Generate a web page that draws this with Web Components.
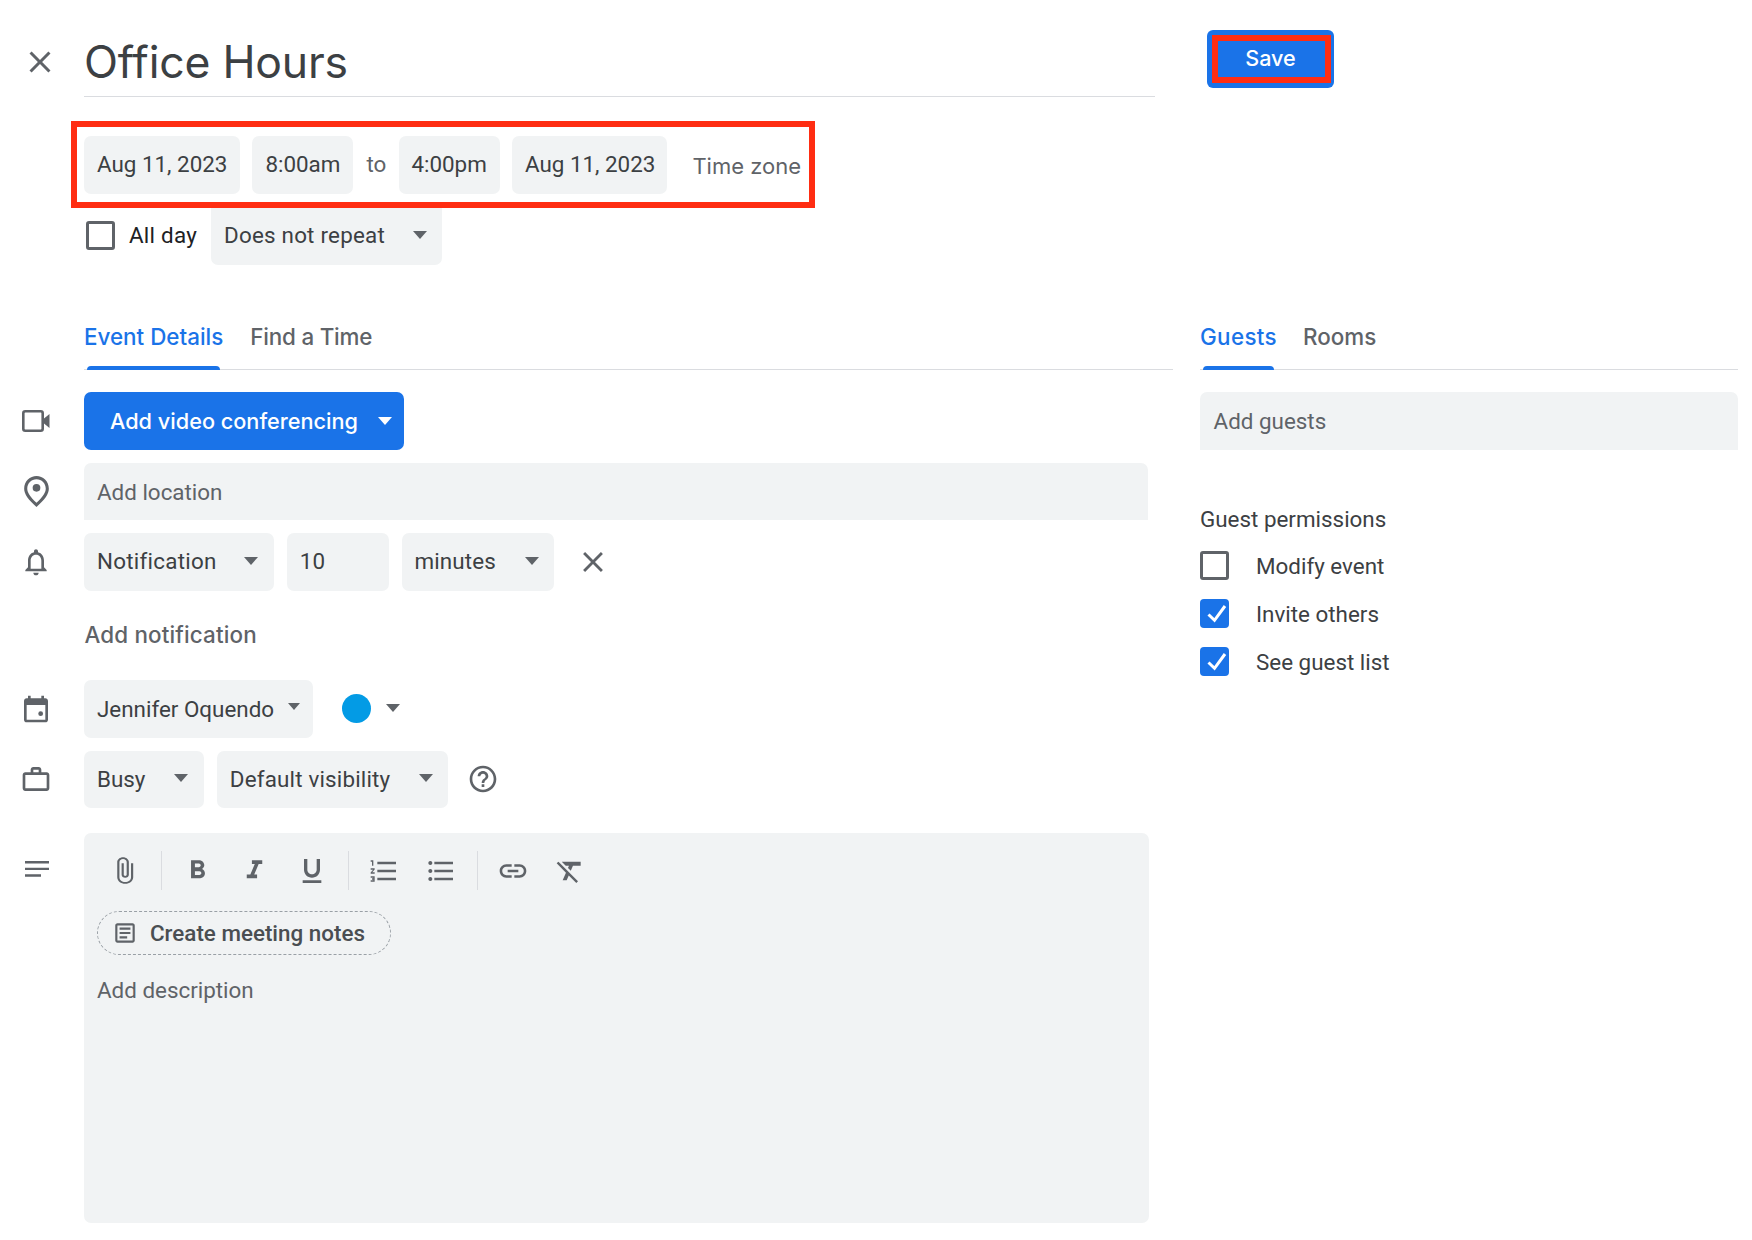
<!DOCTYPE html>
<html lang="en">
<head>
<meta charset="utf-8">
<title>Office Hours</title>
<style>
html,body{margin:0;padding:0;background:#fff;font-family:Roboto,"Liberation Sans",sans-serif;}
</style>
</head>
<body>
<gc-event-editor></gc-event-editor>
<script>
const ICONS={
close:'<path d="M19 6.41L17.59 5 12 10.59 6.41 5 5 6.41 10.59 12 5 17.59 6.41 19 12 13.41 17.59 19 19 17.59 13.41 12z"/>',
pin:'<path d="M18 10.2C18 6.57 15.35 4 12 4s-6 2.57-6 6.2c0 2.34 1.95 5.44 6 9.14 4.05-3.7 6-6.8 6-9.14zM12 2c4.2 0 8 3.22 8 8.2 0 3.32-2.67 7.25-8 11.8-5.33-4.55-8-8.48-8-11.8C4 5.22 7.8 2 12 2z"/><circle cx="12" cy="9.6" r="2.5"/>',
bell:'<path d="M12 22c1.1 0 2-.9 2-2h-4c0 1.1.9 2 2 2zm6-6v-5c0-3.07-1.63-5.64-4.5-6.32V4c0-.83-.67-1.5-1.5-1.5s-1.5.67-1.5 1.5v.68C7.64 5.36 6 7.92 6 11v5l-2 2v1h16v-1l-2-2zm-2 1H8v-6c0-2.48 1.51-4.5 4-4.5s4 2.02 4 4.5v6z"/>',
calendar:'<path d="M19 4h-1V2h-2v2H8V2H6v2H5c-1.1 0-2 .9-2 2v14c0 1.1.9 2 2 2h14c1.1 0 2-.9 2-2V6c0-1.1-.9-2-2-2zm0 16H5V9h14v11z"/><circle cx="15.5" cy="15.5" r="1.8"/>',
briefcase:'<path d="M20 7h-4V5c0-1.1-.9-2-2-2h-4c-1.1 0-2 .9-2 2v2H4c-1.1 0-2 .9-2 2v10c0 1.1.9 2 2 2h16c1.1 0 2-.9 2-2V9c0-1.1-.9-2-2-2zM10 5h4v2h-4V5zm10 14H4V9h16v10z"/>',
help:'<path d="M11 18h2v-2h-2v2zm1-16C6.48 2 2 6.48 2 12s4.48 10 10 10 10-4.48 10-10S17.52 2 12 2zm0 18c-4.41 0-8-3.59-8-8s3.59-8 8-8 8 3.59 8 8-3.59 8-8 8zm0-14c-2.21 0-4 1.79-4 4h2c0-1.1.9-2 2-2s2 .9 2 2c0 2-3 1.75-3 5h2c0-2.25 3-2.5 3-5 0-2.21-1.79-4-4-4z"/>',
lines:'<path d="M3 6h18v1.8H3zM3 11h18v1.8H3zM3 16h12v1.8H3z"/>',
clip:'<path d="M16.5 6v11.5c0 2.21-1.79 4-4 4s-4-1.79-4-4V5c0-1.38 1.12-2.5 2.5-2.5s2.5 1.12 2.5 2.5v10.5c0 .55-.45 1-1 1s-1-.45-1-1V6H10v9.5c0 1.38 1.12 2.5 2.5 2.5s2.5-1.12 2.5-2.5V5c0-2.21-1.79-4-4-4S7 2.79 7 5v12.5c0 3.04 2.46 5.5 5.5 5.5s5.5-2.46 5.5-5.5V6h-1.5z"/>',
bold:'<path d="M15.6 10.79c.97-.67 1.65-1.77 1.65-2.79 0-2.26-1.75-4-4-4H7v14h7.04c2.09 0 3.71-1.7 3.71-3.79 0-1.52-.86-2.82-2.15-3.42zM10 6.5h3c.83 0 1.5.67 1.5 1.5s-.67 1.5-1.5 1.5h-3v-3zm3.5 9H10v-3h3.5c.83 0 1.5.67 1.5 1.5s-.67 1.5-1.5 1.5z"/>',
italic:'<path d="M10 4v3h2.21l-3.42 8H6v3h8v-3h-2.21l3.42-8H18V4z"/>',
underline:'<path d="M12 17c3.31 0 6-2.69 6-6V3h-2.5v8c0 1.93-1.57 3.5-3.5 3.5S8.5 12.93 8.5 11V3H6v8c0 3.31 2.69 6 6 6zm-7 2v2h14v-2H5z"/>',
ol:'<path d="M2 17h2v.5H3v1h1v.5H2v1h3v-4H2v1zm1-9h1V4H2v1h1v3zm-1 3h1.8L2 13.1v.9h3v-1H3.2L5 10.9V10H2v1zm5-6v2h14V5H7zm0 14h14v-2H7v2zm0-6h14v-2H7v2z"/>',
ul:'<path d="M4 10.5c-.83 0-1.5.67-1.5 1.5s.67 1.5 1.5 1.5 1.5-.67 1.5-1.5-.67-1.5-1.5-1.5zm0-6c-.83 0-1.5.67-1.5 1.5S3.17 7.5 4 7.5 5.5 6.83 5.5 6 4.83 4.5 4 4.5zm0 12c-.83 0-1.5.68-1.5 1.5s.68 1.5 1.5 1.5 1.5-.68 1.5-1.5-.67-1.5-1.5-1.5zM7 19h14v-2H7v2zm0-6h14v-2H7v2zm0-8v2h14V5H7z"/>',
link:'<path d="M3.9 12c0-1.71 1.39-3.1 3.1-3.1h4V7H7c-2.76 0-5 2.24-5 5s2.24 5 5 5h4v-1.9H7c-1.71 0-3.1-1.39-3.1-3.1zM8 13h8v-2H8v2zm9-6h-4v1.9h4c1.71 0 3.1 1.39 3.1 3.1s-1.39 3.1-3.1 3.1h-4V17h4c2.76 0 5-2.24 5-5s-2.24-5-5-5z"/>',
clear:'<path d="M3.27 5L2 6.27l6.97 6.97L6.5 19h3l1.57-3.66L16.73 21 18 19.73 3.55 5.27 3.27 5zM6 5v.18L8.82 8h2.4l-.72 1.68 2.1 2.1L14.21 8H20V5H6z"/>',
note:'<path d="M19 5v14H5V5h14m0-2H5c-1.1 0-2 .9-2 2v14c0 1.1.9 2 2 2h14c1.1 0 2-.9 2-2V5c0-1.1-.9-2-2-2z"/><path d="M14 17H7v-2h7v2zm3-4H7v-2h10v2zm0-4H7V7h10v2z"/>'
};

class GcIcon extends HTMLElement{
  connectedCallback(){
    if(this.shadowRoot)return;
    const s=this.getAttribute('size')||'32';
    const n=this.getAttribute('name');
    const r=this.attachShadow({mode:'open'});
    let svg;
    if(n==='video'){
      svg=`<svg width="28" height="22" viewBox="0 0 28 22"><rect x="1.3" y="1.3" width="19.4" height="19.4" rx="2" fill="none" stroke="currentColor" stroke-width="2.6"/><path d="M22 8.5L27.5 4v14L22 13.5z" fill="currentColor"/></svg>`;
    }else{
      svg=`<svg width="${s}" height="${s}" viewBox="0 0 24 24" fill="currentColor">${ICONS[n]||''}</svg>`;
    }
    r.innerHTML=`<style>:host{display:inline-flex;align-items:center;justify-content:center;color:#5f6368;line-height:0}svg{display:block}</style>${svg}`;
  }
}
customElements.define('gc-icon',GcIcon);

class GcCaret extends HTMLElement{
  constructor(){
    super();
    this.attachShadow({mode:'open'}).innerHTML=`<style>
      :host{display:block;flex:none;width:0;height:0;border-left:var(--cw,7px) solid transparent;border-right:var(--cw,7px) solid transparent;border-top:var(--ch,8px) solid var(--cc,#5f6368);transform:translateY(var(--cy,-1px))}
    </style>`;
  }
}
customElements.define('gc-caret',GcCaret);

class GcChip extends HTMLElement{
  constructor(){
    super();
    this.attachShadow({mode:'open'}).innerHTML=`<style>
      :host{display:inline-flex;align-items:center;box-sizing:border-box;height:57.6px;padding:0 var(--pr,13px) 0 var(--pl,13px);background:#f1f3f4;border-radius:7px;color:#3c4043;font:400 22.4px/1 Roboto,sans-serif;white-space:nowrap;width:var(--w,auto);letter-spacing:var(--ls,0)}
      .t{flex:1;display:block;transform:translateY(var(--ty,-1px))}
      gc-caret{display:none}
      :host([caret]) gc-caret{display:block}
    </style><span class="t"><slot></slot></span><gc-caret></gc-caret>`;
  }
}
customElements.define('gc-chip',GcChip);

class GcCallout extends HTMLElement{
  constructor(){
    super();
    this.attachShadow({mode:'open'}).innerHTML=`<style>
      :host{display:inline-flex;position:relative}
      .m{position:absolute;top:var(--t);right:var(--r);bottom:var(--b);left:var(--l);border:6px solid #ff2d12;pointer-events:none;z-index:2}
    </style><slot></slot><div class="m"></div>`;
  }
}
customElements.define('gc-callout',GcCallout);

class GcTab extends HTMLElement{
  constructor(){
    super();
    this.attachShadow({mode:'open'}).innerHTML=`<style>
      :host{display:inline-flex;align-items:center;position:relative;height:65px;color:#5f6368;font:500 22.4px/1 Inter,Roboto,sans-serif;white-space:nowrap}
      :host([active]){color:#1a73e8}
      :host([active])::after{content:"";position:absolute;left:3px;right:3px;bottom:0;height:4px;background:#1a73e8;border-radius:4px 4px 0 0}
    </style><span><slot></slot></span>`;
  }
}
customElements.define('gc-tab',GcTab);

class GcTabs extends HTMLElement{
  constructor(){
    super();
    this.attachShadow({mode:'open'}).innerHTML=`<style>
      :host{display:flex;gap:26px;height:65px;border-bottom:1px solid #dadce0}
    </style><slot></slot>`;
  }
}
customElements.define('gc-tabs',GcTabs);

class GcCheck extends HTMLElement{
  constructor(){
    super();
    this.attachShadow({mode:'open'}).innerHTML=`<style>
      :host{display:flex;align-items:center;gap:var(--gap,27px);height:29px;color:#3c4043;font:400 22.4px/1 Roboto,sans-serif;white-space:nowrap}
      .b{box-sizing:border-box;width:29px;height:29px;border:3px solid #5f6368;border-radius:3px;flex:none;display:block}
      :host([checked]) .b{border:none;background:#1a73e8;border-radius:4px}
      svg{display:none}
      :host([checked]) svg{display:block}
    </style><span class="b"><svg width="29" height="29" viewBox="0 0 29 29"><path d="M8.5 15.5l6 5.8L25 7" fill="none" stroke="#fff" stroke-width="3"/></svg></span><span><slot></slot></span>`;
  }
}
customElements.define('gc-check',GcCheck);

class GcRow extends HTMLElement{
  constructor(){
    super();
    this.attachShadow({mode:'open'}).innerHTML=`<style>
      :host{display:flex;align-items:center;min-height:57.6px}
      .g{width:72px;margin-right:12px;flex:none;display:flex;justify-content:center;align-items:center}
      .c{flex:1;min-width:0;display:flex;align-items:center;gap:12.8px}
    </style><div class="g"><slot name="icon"></slot></div><div class="c"><slot></slot></div>`;
  }
}
customElements.define('gc-row',GcRow);

class GcField extends HTMLElement{
  constructor(){
    super();
    this.attachShadow({mode:'open'}).innerHTML=`<style>
      :host{display:flex;align-items:center;box-sizing:border-box;height:57.6px;padding:0 13px;background:#f1f3f4;border-radius:7px 7px 0 0;color:#5f6368;font:400 22.4px/1 Roboto,sans-serif}
      span{display:block;transform:translateY(var(--ty,0))}
    </style><span><slot></slot></span>`;
  }
}
customElements.define('gc-field',GcField);

class GcToolbar extends HTMLElement{
  constructor(){
    super();
    const btn=(n,s,st='')=>`<span class="i"><gc-icon name="${n}" size="${s}" style="${st}"></gc-icon></span>`;
    this.attachShadow({mode:'open'}).innerHTML=`<style>
      :host{display:flex;align-items:center;box-sizing:border-box;height:67.2px;padding:7.6px 0 0 13px}
      .i{display:flex;width:57.6px;height:57.6px;align-items:center;justify-content:center;flex:none}
      .s{display:block;width:1px;height:39px;background:#dadce0;margin:0 6.4px;flex:none}
    </style>${btn('clip',29,'transform:translateX(-1px) scaleX(1.2)')}<span class="s"></span>${btn('bold',31)}${btn('italic',31)}${btn('underline',32)}<span class="s"></span>${btn('ol',32)}${btn('ul',32)}<span class="s"></span>${btn('link',32)}${btn('clear',32)}`;
  }
}
customElements.define('gc-toolbar',GcToolbar);

class GcEventEditor extends HTMLElement{
  constructor(){
    super();
    this.attachShadow({mode:'open'}).innerHTML=`<style>
      :host{display:block;width:1752px;height:1240px;overflow:hidden;background:#fff;color:#3c4043;font:400 22.4px/1 Roboto,sans-serif}
      *{box-sizing:border-box}
      header{display:flex;align-items:flex-start;padding-top:30px}
      .x{width:80px;margin-right:4px;height:67px;display:flex;align-items:center;justify-content:center;margin-top:-2px;flex:none}
      .title{width:1071px;height:67px;border-bottom:1px solid #dadce0;flex:none;font:400 44.5px/1 Inter,Roboto,sans-serif;letter-spacing:-.2px;color:#3c4043;padding:10px 0 0 0}
      .save-wrap{margin-left:52px;--t:5px;--r:3px;--b:5px;--l:5px}
      .save{width:127px;height:58px;background:#1a73e8;border-radius:6px;color:#fff;font:500 21.6px/56px Inter,Roboto,sans-serif;text-align:center}
      .dates{margin:39px 0 0 84px;--t:-15px;--r:-16px;--b:-14px;--l:-13px}
      .drow{display:flex;align-items:center;gap:12px}
      .to{width:22px;text-align:center;color:#5f6368;transform:translateY(-1px)}
      .tz{margin-left:13.5px;width:107px;color:#5f6368;font:400 22px/1 Inter,Roboto,sans-serif;white-space:nowrap;transform:translateY(1px)}
      .allday{display:flex;align-items:center;margin:14px 0 0 86px;height:57.6px;--gap:14px}
      .allday gc-chip{margin-left:15px;--pr:15px;width:231px;--ls:.22px;border-radius:0 0 7px 7px}
      .allday gc-check{color:#202124;width:110px;letter-spacing:.25px;transform:translateY(-1px)}
      .cols{display:flex;margin-top:40px}
      .left{width:1173px;flex:none}
      .left gc-tabs{margin-left:84px}
      .rows{display:flex;flex-direction:column;gap:12.8px;padding-top:22px}
      .right{width:538px;margin-left:27px;flex:none}
      .addn{height:64px;display:flex;align-items:center;margin:0 0 0 84.5px;color:#5f6368;font:500 22.4px/1 Inter,Roboto,sans-serif;letter-spacing:.15px}
      .panel{margin:25.1px 0 0 84px;width:1065px;height:390px;background:#f1f3f4;border-radius:7px;display:block}
      .pill{display:inline-flex;align-items:center;gap:12px;margin:11px 0 0 13px;height:44px;width:294px;padding-left:14px;border:1px dashed #9aa0a6;border-radius:22px;font-weight:500;color:#4a4e52;white-space:nowrap}
      .desc{margin:24px 0 0 13px;color:#5f6368;line-height:22px}
      .right gc-field{margin-top:22px;padding-left:13.6px}
      .gp{margin-top:57.5px;color:#3c4043;line-height:24px}
      .checks{display:flex;flex-direction:column;gap:19px;margin-top:20px}
    </style>
    <header>
      <div class="x"><gc-icon name="close" size="36"></gc-icon></div>
      <div class="title">Office Hours</div>
      <gc-callout class="save-wrap"><div class="save">Save</div></gc-callout>
    </header>
    <gc-callout class="dates"><div class="drow">
      <gc-chip>Aug 11, 2023</gc-chip>
      <gc-chip>8:00am</gc-chip>
      <span class="to">to</span>
      <gc-chip style="--pl:12px;--pr:12px;width:100.5px">4:00pm</gc-chip>
      <gc-chip style="width:155px">Aug 11, 2023</gc-chip>
      <span class="tz">Time zone</span>
    </div></gc-callout>
    <div class="allday">
      <gc-check>All day</gc-check>
      <gc-chip caret>Does not repeat</gc-chip>
    </div>
    <div class="cols">
      <section class="left">
        <gc-tabs><gc-tab active>Event Details</gc-tab><gc-tab style="letter-spacing:-.2px;margin-left:1px">Find a Time</gc-tab></gc-tabs>
        <div class="rows">
          <gc-row>
            <gc-icon slot="icon" name="video"></gc-icon>
            <gc-chip caret style="background:#1a73e8;color:#fff;font:500 21.7px/1 Inter,Roboto,sans-serif;width:320px;--pl:26px;--pr:12px;--cc:#fff;--ty:1px;--cy:0">Add video conferencing</gc-chip>
          </gc-row>
          <gc-row>
            <gc-icon slot="icon" name="pin" size="37"></gc-icon>
            <gc-field style="flex:1;margin-right:25px;--ty:.6px">Add location</gc-field>
          </gc-row>
          <gc-row>
            <gc-icon slot="icon" name="bell" size="32"></gc-icon>
            <gc-chip caret style="width:190px;--pr:16px;--ls:.25px;--ty:-.8px">Notification</gc-chip>
            <gc-chip style="width:102px;--ty:-.8px">10</gc-chip>
            <gc-chip caret style="width:152px;--pr:15px;--ls:.1px;--ty:-.8px">minutes</gc-chip>
            <gc-icon name="close" size="34" style="margin-left:10px"></gc-icon>
          </gc-row>
          <div class="addn">Add notification</div>
          <gc-row>
            <gc-icon slot="icon" name="calendar" size="32"></gc-icon>
            <gc-chip caret style="width:229px;--pr:13px;--cw:6px;--ch:7px;--ty:-.5px;--cy:-2px">Jennifer Oquendo</gc-chip>
            <span style="width:29px;height:29px;border-radius:50%;background:#039be5;margin-left:16px;flex:none"></span>
            <gc-caret style="margin:0 0 0 2px"></gc-caret>
          </gc-row>
          <gc-row>
            <gc-icon slot="icon" name="briefcase" size="32"></gc-icon>
            <gc-chip caret style="width:120px;--pr:16px;--ty:0">Busy</gc-chip>
            <gc-chip caret style="width:231px;--pr:15px;--ty:0;--ls:.18px">Default visibility</gc-chip>
            <gc-icon name="help" size="32" style="margin-left:6px"></gc-icon>
          </gc-row>
        </div>
        <div style="position:relative">
          <gc-icon name="lines" size="32" style="position:absolute;left:21px;top:20px"></gc-icon>
          <div class="panel">
            <gc-toolbar></gc-toolbar>
            <div class="pill"><gc-icon name="note" size="26"></gc-icon><span>Create meeting notes</span></div>
            <div class="desc">Add description</div>
          </div>
        </div>
      </section>
      <section class="right">
        <gc-tabs><gc-tab active style="letter-spacing:.35px">Guests</gc-tab><gc-tab>Rooms</gc-tab></gc-tabs>
        <gc-field>Add guests</gc-field>
        <div class="gp">Guest permissions</div>
        <div class="checks">
          <gc-check>Modify event</gc-check>
          <gc-check checked>Invite others</gc-check>
          <gc-check checked>See guest list</gc-check>
        </div>
      </section>
    </div>`;
  }
}
customElements.define('gc-event-editor',GcEventEditor);
</script>
</body>
</html>
